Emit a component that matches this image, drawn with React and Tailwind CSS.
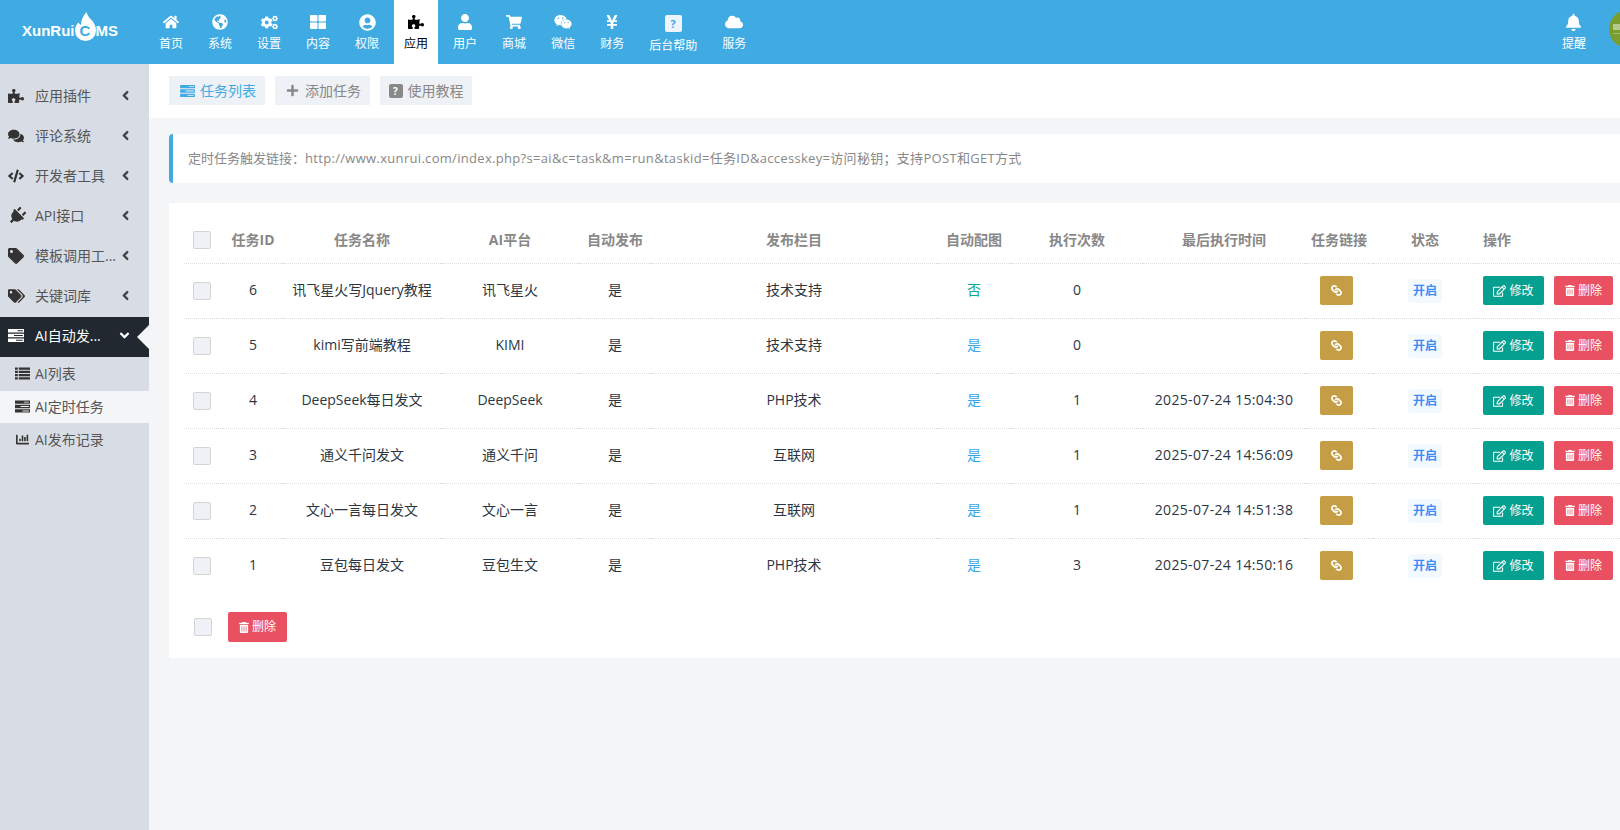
import {
  FaHome,
  FaGlobeAmericas,
  FaCogs,
  FaThLarge,
  FaUserCircle,
  FaPuzzlePiece,
  FaUser,
  FaShoppingCart,
  FaWeixin,
  FaYenSign,
  FaCloud,
  FaBell,
  FaPlus,
  FaComments,
  FaCode,
  FaPlug,
  FaTag,
  FaTags,
  FaChartBar,
  FaLink,
  FaRegEdit,
  FaTrashAlt,
  FaAngleLeft,
  FaAngleDown,
} from "react-icons/fa";

// three bars with slits, the old font-awesome "tasks" glyph
const TasksIcon = ({ className }) => (
  <svg viewBox="0 0 16 13" className={className} fill="currentColor" fillRule="evenodd">
    <path d="M0 0h16v3.600H0z M9.500 1.300h5.300v1H9.500z M0 4.700h16v3.600H0z M6 6h8.800v1H6z M0 9.400h16v3.600H0z M8 10.700h6.800v1H8z" />
  </svg>
);

const ListIcon = ({ className }) => (
  <svg viewBox="0 0 16 13" className={className} fill="currentColor">
    <path d="M0 0h3v2.500H0z M4 0h12v2.500H4z M0 3.500h3V6H0z M4 3.500h12V6H4z M0 7h3v2.500H0z M4 7h12v2.500H4z M0 10.500h3V13H0z M4 10.500h12V13H4z" />
  </svg>
);

const navItems = [
  { label: "首页", icon: FaHome, size: "h-[16px]" },
  { label: "系统", icon: FaGlobeAmericas, size: "h-[16px]" },
  { label: "设置", icon: FaCogs, size: "h-[17px]" },
  { label: "内容", icon: FaThLarge, size: "h-[16px]" },
  { label: "权限", icon: FaUserCircle, size: "h-[17px]" },
  { label: "应用", icon: FaPuzzlePiece, size: "h-[16px]", active: true },
  { label: "用户", icon: FaUser, size: "h-[16px]" },
  { label: "商城", icon: FaShoppingCart, size: "h-[16px]" },
  { label: "微信", icon: FaWeixin, size: "h-[18px]" },
  { label: "财务", icon: FaYenSign, size: "h-[16px]" },
];

const sideItems = [
  { label: "应用插件", icon: FaPuzzlePiece, size: "w-4 h-4" },
  { label: "评论系统", icon: FaComments, size: "w-4 h-4" },
  { label: "开发者工具", icon: FaCode, size: "w-4 h-4" },
  { label: "API接口", icon: FaPlug, size: "w-[18px] h-[18px] rotate-45" },
  { label: "模板调用工...", icon: FaTag, size: "w-4 h-4" },
  { label: "关键词库", icon: FaTags, size: "w-[17px] h-4" },
];

const subItems = [
  { label: "AI列表", icon: ListIcon },
  { label: "AI定时任务", icon: TasksIcon, active: true },
  { label: "AI发布记录", icon: FaChartBar },
];

const rows = [
  { id: 6, name: "讯飞星火写Jquery教程", ai: "讯飞星火", cat: "技术支持", pic: "否", count: 0, time: "" },
  { id: 5, name: "kimi写前端教程", ai: "KIMI", cat: "技术支持", pic: "是", count: 0, time: "" },
  { id: 4, name: "DeepSeek每日发文", ai: "DeepSeek", cat: "PHP技术", pic: "是", count: 1, time: "2025-07-24 15:04:30" },
  { id: 3, name: "通义千问发文", ai: "通义千问", cat: "互联网", pic: "是", count: 1, time: "2025-07-24 14:56:09" },
  { id: 2, name: "文心一言每日发文", ai: "文心一言", cat: "互联网", pic: "是", count: 1, time: "2025-07-24 14:51:38" },
  { id: 1, name: "豆包每日发文", ai: "豆包生文", cat: "PHP技术", pic: "是", count: 3, time: "2025-07-24 14:50:16" },
];

const colWidths = [
  "w-[39px]", "w-[60px]", "w-[158px]", "w-[138px]", "w-[72px]", "w-[286px]",
  "w-[74px]", "w-[132px]", "w-[162px]", "w-[68px]", "w-[104px]", "w-[173px]",
];

const heads = ["任务ID", "任务名称", "AI平台", "自动发布", "发布栏目", "自动配图", "执行次数", "最后执行时间", "任务链接", "状态"];

const Checkbox = () => (
  <span className="block w-[18px] h-[18px] bg-[#eef1f5] border border-[#d4d4d4] rounded-[2px]" />
);

const Logo = () => (
  <div className="w-[149px] shrink-0 flex items-center pl-[22px] pb-[2px] text-white font-bold text-[15px] font-['Liberation_Sans',sans-serif]">
    <span>XunRui</span>
    <span className="relative w-[21px] h-[29px] mb-[9px]">
      <svg viewBox="0 0 21 29" className="w-[21px] h-[29px]" fill="#ffffff">
        <path d="M11.500 0C12 3 14 5 16 7.500C19 10.500 21 14 21 18.500A10.500 10.500 0 1 1 0 18.500C0 15 1.500 12.500 3.500 10.500C4 11.500 5 12.500 6 13C6 8 8 4 11.500 0Z" />
      </svg>
      <span className="absolute left-0 right-0 top-[10px] text-center text-[15px] leading-[18px] text-[#40abe3]">C</span>
    </span>
    <span>MS</span>
  </div>
);

const NavItem = ({ label, icon: Icon, size, active }) => (
  <a
    className={`flex flex-col items-center h-16 px-[10px] mr-[5px] pt-[13px] text-[12px] leading-[16px] ${
      active ? "bg-white text-black" : "text-white"
    }`}
  >
    <span className="h-[18px] flex items-center mb-[5px]">
      <Icon className={`${size} w-auto`} />
    </span>
    <span>{label}</span>
  </a>
);

const App = () => {
  return (
    <div className="h-screen w-full overflow-hidden flex flex-col bg-[#f4f5f7] text-[#333] font-['Open_Sans','Noto_Sans_CJK_SC',sans-serif]">
      <header className="h-16 shrink-0 flex bg-[#40abe3]">
        <Logo />
        {navItems.map((item) => (
          <NavItem key={item.label} {...item} />
        ))}
        <a className="flex flex-col items-center h-16 px-[10px] mr-[5px] pt-[15px] text-[12px] leading-[16px] text-white">
          <span className="w-[17px] h-[17px] mb-[6px] rounded-[2px] bg-[#eef4fb] text-[#40abe3] text-[11px] leading-[17px] text-center font-bold">?</span>
          <span>后台帮助</span>
        </a>
        <NavItem label="服务" icon={FaCloud} size="h-[18px]" />
        <div className="flex-1" />
        <NavItem label="提醒" icon={FaBell} size="h-[17px]" />
        {/* avatar runs off the right edge, its tiny logo is only a smudge there */}
        <div className="shrink-0 w-[38px] h-[38px] rounded-full bg-[#7a9e2e] mt-[10px] ml-[8px] mr-[-27px] pl-[4px] pt-[14px]">
          <span className="block w-[7px] h-[6px] bg-[#b5c98a]" />
          <span className="block w-[7px] h-px mt-[3px] bg-[#a3bb70]" />
        </div>
      </header>

      <div className="flex-1 flex min-h-0">
        <aside className="w-[149px] shrink-0 bg-[#d8dde5] pt-[13px] text-[14px] text-[#555]">
          {sideItems.map(({ label, icon: Icon, size }) => (
            <a key={label} className="h-10 flex items-center pl-[8px] pr-[19px] pb-[3px]">
              <span className="w-[27px] shrink-0">
                <Icon className={`${size} text-[#333]`} />
              </span>
              <span className="flex-1 whitespace-nowrap">{label}</span>
              <FaAngleLeft className="w-[9px] h-[15px] text-[#444]" />
            </a>
          ))}
          <a className="relative h-10 flex items-center pl-[8px] pr-[18px] pb-[3px] bg-[#212830] text-white">
            <span className="w-[27px] shrink-0">
              <TasksIcon className="w-4 h-[13px]" />
            </span>
            <span className="flex-1 whitespace-nowrap">AI自动发...</span>
            <FaAngleDown className="w-[13px] h-[15px]" />
            <span className="absolute right-0 top-[8px] border-y-[12px] border-y-transparent border-r-[12px] border-r-[#f4f5f7]" />
          </a>
          <div className="pt-px">
            {subItems.map(({ label, icon: Icon, active }) => (
              <a
                key={label}
                className={`h-[32px] mb-px flex items-center pl-[15px] pb-[2px] ${active ? "bg-[#f4f5f7]" : ""}`}
              >
                <span className="w-[20px] shrink-0">
                  <Icon className="w-[15px] h-[13px] text-[#333]" />
                </span>
                <span>{label}</span>
              </a>
            ))}
          </div>
        </aside>

        <main className="flex-1 min-w-0">
          <div className="h-[54px] bg-white flex items-start gap-[10px] pl-[20px] pt-[12px] text-[14px] text-[#888]">
            <a className="h-[29px] w-[96px] flex items-center pl-[11px] gap-[5px] bg-[#eef1f5] text-[#40abe3]">
              <TasksIcon className="w-[15px] h-[12px]" />
              任务列表
            </a>
            <a className="h-[29px] w-[95px] flex items-center pl-[11px] gap-[6px] bg-[#eef1f5]">
              <FaPlus className="w-[13px] h-[13px]" />
              添加任务
            </a>
            <a className="h-[29px] w-[92px] flex items-center justify-center gap-[5px] bg-[#eef1f5]">
              <span className="w-[14px] h-[14px] rounded-[2px] bg-[#888] text-white text-[10px] leading-[14px] text-center font-bold">?</span>
              使用教程
            </a>
          </div>

          <div className="ml-[20px] mt-[16px] h-[49px] w-[1500px] bg-white border-l-4 border-[#40abe3] rounded-l-[4px] flex items-center pl-[15px] text-[13px] text-[#888] whitespace-nowrap">
            定时任务触发链接：
            <span className="tracking-[0.31px]">
              http://www.xunrui.com/index.php?s=ai&amp;c=task&amp;m=run&amp;taskid=任务ID&amp;accesskey=访问秘钥；支持POST和GET方式
            </span>
          </div>

          <section className="ml-[20px] mt-[20px] w-[1500px] h-[455px] bg-white rounded-[2px] pl-[15px] pt-[15px]">
            <table className="table-fixed w-[1460px] border-collapse text-[14px] text-[#2b3643]">
              <colgroup>
                {colWidths.map((w, i) => (
                  <col key={i} className={w} />
                ))}
              </colgroup>
              <thead>
                <tr className="h-[45px] border-b border-dotted border-[#dcdcdc]">
                  <th className="pl-[9px] text-left font-normal">
                    <Checkbox />
                  </th>
                  {heads.map((h) => (
                    <th key={h} className="text-center pb-[2px] text-[14px] font-bold text-[#888] whitespace-nowrap">
                      {h}
                    </th>
                  ))}
                  <th className="pl-[6px] pb-[2px] text-left text-[14px] font-bold text-[#888]">操作</th>
                </tr>
              </thead>
              <tbody>
                {rows.map((row, i) => (
                  <tr
                    key={row.id}
                    className={`h-[55px] ${i < rows.length - 1 ? "border-b border-dotted border-[#dcdcdc]" : ""}`}
                  >
                    <td className="pl-[9px]">
                      <Checkbox />
                    </td>
                    <td className="text-center pb-[2px]">{row.id}</td>
                    <td className="text-center pb-[2px] whitespace-nowrap">{row.name}</td>
                    <td className="text-center pb-[2px]">{row.ai}</td>
                    <td className="text-center pb-[2px]">是</td>
                    <td className="text-center pb-[2px]">{row.cat}</td>
                    <td className={`text-center pb-[2px] ${row.pic === "否" ? "text-[#0fa58f]" : "text-[#3ba5e8]"}`}>{row.pic}</td>
                    <td className="text-center pb-[2px]">{row.count}</td>
                    <td className="text-center pb-[2px] tracking-[0.34px] whitespace-nowrap">{row.time}</td>
                    <td>
                      <a className="ml-[15px] w-[33px] h-[29px] flex items-center justify-center rounded-[2px] bg-[#c49d45] text-white">
                        <FaLink className="w-[11px] h-[11px] rotate-90" />
                      </a>
                    </td>
                    <td>
                      <span className="mx-auto w-[34px] h-[24px] flex items-center justify-center rounded-[3px] bg-[#f2f9ff] text-[12px] font-bold text-[#3b8cf7]">
                        开启
                      </span>
                    </td>
                    <td className="pl-[6px]">
                      <div className="flex gap-[10px] text-[12px] text-white">
                        <a className="w-[61px] h-[29px] flex items-center justify-center gap-[3px] rounded-[2px] bg-[#05a08f]">
                          <FaRegEdit className="w-[13px] h-[12px]" />
                          修改
                        </a>
                        <a className="w-[59px] h-[29px] flex items-center justify-center gap-[3px] rounded-[2px] bg-[#e95061]">
                          <FaTrashAlt className="w-[10px] h-[11px]" />
                          删除
                        </a>
                      </div>
                    </td>
                  </tr>
                ))}
              </tbody>
            </table>
            <div className="flex items-center mt-[19px] pl-[10px] gap-[16px]">
              <Checkbox />
              <a className="w-[59px] h-[30px] flex items-center justify-center gap-[3px] rounded-[2px] bg-[#e95061] text-[12px] text-white">
                <FaTrashAlt className="w-[10px] h-[11px]" />
                删除
              </a>
            </div>
          </section>
        </main>
      </div>
    </div>
  );
};

export default App;
